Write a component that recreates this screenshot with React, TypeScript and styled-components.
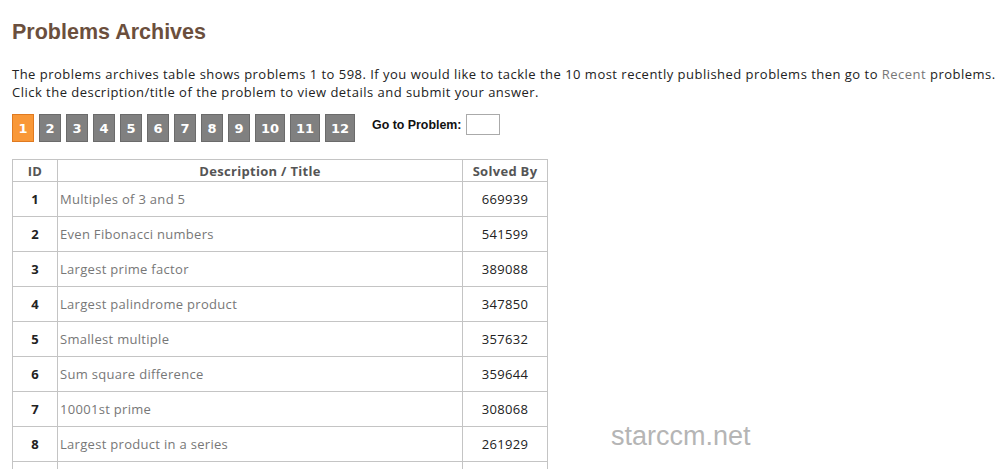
import React from "react";
import styled, { createGlobalStyle } from "styled-components";

const Global = createGlobalStyle`
  html, body { margin: 0; padding: 0; background: #fff; }
  body { font-family: "Open Sans", "DejaVu Sans", sans-serif; font-size: 13px; color: #222; }
`;

const Page = styled.div`
  padding: 0 12px;
  position: relative;
  height: 469px;
  overflow: hidden;
`;

const Title = styled.h2`
  margin: 0;
  padding-top: 21px;
  font-family: "Liberation Sans", Arial, sans-serif;
  font-size: 21.5px;
  font-weight: bold;
  line-height: 23px;
  color: #6b4f3d;
`;

const Intro = styled.p`
  margin: 21px 0 0;
  line-height: 18px;
  white-space: nowrap;
  letter-spacing: 0.48px;
`;

const Link = styled.a`
  color: #777;
  text-decoration: none;
`;

const Pager = styled.div`
  display: flex;
  align-items: center;
  gap: 5px;
  margin-top: 13px;
`;

const PageButton = styled.a<{ $active?: boolean; $wide?: boolean }>`
  display: flex;
  align-items: center;
  justify-content: center;
  box-sizing: border-box;
  width: ${(p) => (p.$wide ? "30px" : "22px")};
  height: 28px;
  background: ${(p) => (p.$active ? "#f99838" : "#808080")};
  border: 1px solid ${(p) => (p.$active ? "#e07a20" : "#6b6b6b")};
  color: #fff;
  font-family: "DejaVu Sans", Verdana, sans-serif;
  font-weight: bold;
  font-size: 13px;
  text-decoration: none;
`;

const GoTo = styled.label`
  display: flex;
  align-items: center;
  gap: 4px;
  margin-left: 12px;
  align-self: flex-start;
  font-family: "Liberation Sans", Arial, sans-serif;
  font-weight: bold;
  font-size: 12.4px;
  color: #111;
`;

const GoInput = styled.input`
  box-sizing: border-box;
  width: 34px;
  height: 21px;
  border: 1px solid #aaa;
  padding: 0;
  margin: 0;
`;

const Table = styled.table`
  margin-top: 17px;
  border-collapse: collapse;
  width: 536px;
  letter-spacing: 0.3px;
`;

const Th = styled.th<{ $w?: string }>`
  border: 1px solid #c4c4c4;
  height: 21px;
  padding: 0;
  font-weight: bold;
  color: #555;
  text-align: center;
  width: ${(p) => p.$w || "auto"};
`;

const Td = styled.td<{ $align?: string; $bold?: boolean }>`
  border: 1px solid #c4c4c4;
  height: 34px;
  padding: 0 2px;
  text-align: ${(p) => p.$align || "center"};
  font-weight: ${(p) => (p.$bold ? "bold" : "normal")};
  color: #222;
`;

const Watermark = styled.div`
  position: absolute;
  left: 611px;
  top: 421px;
  font-family: "Liberation Sans", Arial, sans-serif;
  font-size: 27px;
  color: #b5b5b5;
`;

const rows: [number, string, string][] = [
  [1, "Multiples of 3 and 5", "669939"],
  [2, "Even Fibonacci numbers", "541599"],
  [3, "Largest prime factor", "389088"],
  [4, "Largest palindrome product", "347850"],
  [5, "Smallest multiple", "357632"],
  [6, "Sum square difference", "359644"],
  [7, "10001st prime", "308068"],
  [8, "Largest product in a series", "261929"],
  [9, "Special Pythagorean triplet", "262213"],
];

export default function App() {
  return (
    <Page>
      <Global />
      <Title>Problems Archives</Title>
      <Intro>
        The problems archives table shows problems 1 to 598. If you would like to tackle the 10 most recently
        published problems then go to <Link href="#">Recent</Link> problems.
        <br />
        Click the description/title of the problem to view details and submit your answer.
      </Intro>
      <Pager>
        {Array.from({ length: 12 }, (_, i) => i + 1).map((n) => (
          <PageButton key={n} href="#" $active={n === 1} $wide={n >= 10}>
            {n}
          </PageButton>
        ))}
        <GoTo>
          Go to Problem: <GoInput type="text" />
        </GoTo>
      </Pager>
      <Table>
        <thead>
          <tr>
            <Th $w="44px">ID</Th>
            <Th>Description / Title</Th>
            <Th $w="84px">Solved By</Th>
          </tr>
        </thead>
        <tbody>
          {rows.map(([id, title, solved]) => (
            <tr key={id}>
              <Td $bold>{id}</Td>
              <Td $align="left">
                <Link href="#">{title}</Link>
              </Td>
              <Td>{solved}</Td>
            </tr>
          ))}
        </tbody>
      </Table>
      <Watermark>starccm.net</Watermark>
    </Page>
  );
}
